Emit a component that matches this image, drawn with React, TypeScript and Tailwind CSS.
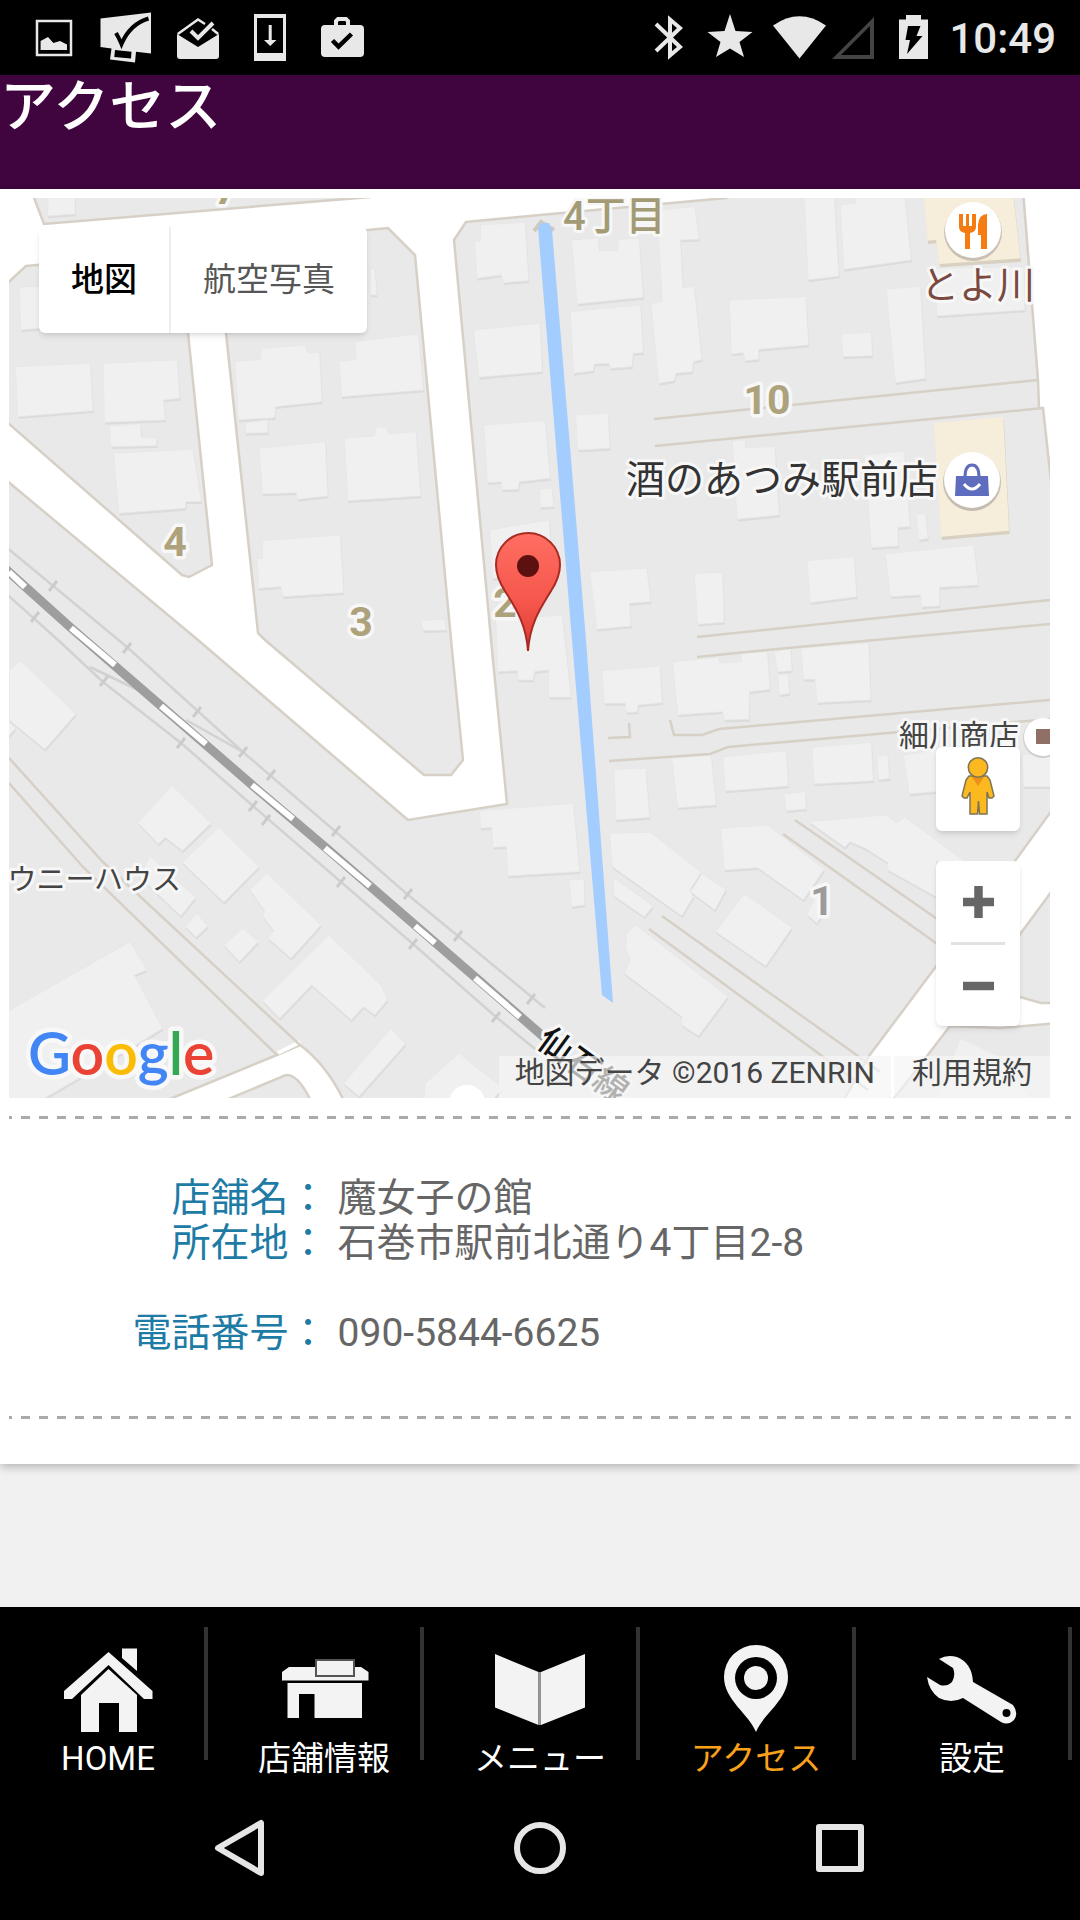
import type { ReactNode } from 'react'

const CREAM = "#f6edda"
const BLOCK = "#e9e9e9"
const EDGE = "#d6d0c7"

// Building outlines, grouped by map tile. Every tile has its own origin.
const tiles = [
    {
        id: "nw",
        transform: "translate(0 190) scale(0.3444 0.3333)",
        cream: [],
        buildings: [
            "140,24 218,24 218,72 138,78",
            "56,290 115,290 115,415 60,420",
            "45,530 262,520 270,662 52,680",
            "300,520 515,510 522,625 475,630 480,690 303,697",
            "318,708 408,702 410,742 455,745 455,767 322,770",
            "330,790 560,778 585,935 540,935 538,955 345,970",
            "682,515 755,508 760,475 885,465 892,487 928,487 935,635 800,650 798,683 692,690",
            "712,698 778,690 778,728 712,730",
            "1075,235 1088,235 1095,315 1075,315",
            "985,515 1035,508 1030,455 1215,432 1230,600 992,620",
            "752,775 945,755 952,918 865,928 860,908 762,912",
            "1000,745 1085,738 1095,710 1120,712 1128,733 1208,725 1222,918 1010,932",
            "762,1052 988,1035 998,1208 822,1220 815,1190 750,1195 748,1105 762,1105",
            "1222,1292 1290,1287 1297,1320 1228,1322",
            "1395,105 1525,97 1535,272 1462,278 1455,255 1385,265 1378,155 1395,152",
            "1375,420 1568,400 1575,545 1390,562",
            "1405,705 1583,692 1598,865 1508,875 1505,898 1458,900 1455,875 1415,878",
            "1568,897 1603,895 1608,950 1568,952",
            "1422,1020 1595,990 1605,1160 1430,1165",
            "1440,1290 1633,1275 1658,1522 1593,1522 1593,1440 1552,1445 1548,1470 1503,1470 1503,1442 1445,1445",
        ],
    },
    {
        id: "ne",
        transform: "translate(540 190) scale(0.3444 0.3333)",
        cream: [
            "1115,24 1375,24 1395,205 1160,222 1150,150 1125,152",
            "1143,700 1345,680 1362,1022 1165,1040",
        ],
        buildings: [
            "92,150 168,145 172,183 225,183 228,148 288,145 300,322 108,342",
            "340,60 450,50 462,148 408,150 415,292 448,290 470,508 445,515 442,545 395,550 390,572 345,580 322,340 355,335",
            "88,365 292,345 300,488 270,490 268,530 205,535 200,520 158,522 155,542 97,550",
            "550,330 772,320 780,465 635,478 635,508 595,512 590,488 555,492",
            "875,432 962,427 965,497 880,500",
            "768,24 855,24 868,258 778,270",
            "872,45 915,40 917,24 1060,24 1078,210 882,238",
            "1005,298 1105,288 1120,565 1032,578",
            "1150,235 1405,230 1408,360 1152,378",
            "103,675 198,670 203,775 110,780",
            "558,752 595,750 597,773 682,770 695,975 572,988",
            "942,795 1058,783 1075,1010 1040,1012 1040,1068 962,1073",
            "1092,975 1120,970 1127,1045 1100,1050",
            "145,1145 310,1135 322,1235 260,1240 265,1308 165,1318",
            "448,1150 530,1148 535,1297 458,1303",
            "775,1112 912,1100 920,1220 785,1238",
            "1003,1092 1260,1065 1273,1185 1160,1192 1160,1248 1108,1250 1105,1215 1018,1220",
        ],
    },
    {
        id: "sw",
        transform: "translate(0 640) scale(0.3444 0.3333)",
        cream: [],
        buildings: [
            "60,62 220,222 130,328 27,240 27,90",
            "20,240 45,265 20,295",
            "500,437 612,550 530,632 480,592 460,612 400,548",
            "635,562 752,680 650,787 530,668",
            "435,648 568,772 525,828 405,710",
            "775,700 932,855 845,955 778,895 795,872 765,832 768,812 725,750",
            "572,820 603,858 570,892 538,860",
            "705,865 750,905 695,965 650,915",
            "955,885 1108,1038 1125,1080 1088,1125 1055,1100 1020,1140 905,1035 812,1135 762,1082",
            "1135,1165 1177,1212 1042,1370 998,1330",
            "1332,1240 1460,1345 1430,1380 1230,1380 1235,1330",
            "20,1115 378,905 425,990 390,1005 472,1165 395,1215 130,1374 20,1390",
            "1393,512 1665,490 1683,695 1475,708 1470,620 1432,622 1427,562 1395,565",
        ],
    },
    {
        id: "se",
        transform: "translate(540 640) scale(0.3444 0.3333)",
        cream: [],
        buildings: [
            "180,92 348,78 355,188 285,195 283,215 250,218 248,190 187,190",
            "385,65 520,52 522,70 585,65 583,40 660,35 668,148 608,155 607,238 535,240 530,215 400,225",
            "680,35 728,25 732,92 690,95",
            "690,105 720,103 725,160 695,165",
            "758,25 955,8 960,180 805,188 798,118 765,118",
            "215,388 308,385 318,532 220,540",
            "382,355 497,345 512,495 400,503",
            "530,350 715,332 722,438 538,453",
            "708,462 770,455 773,507 715,512",
            "790,322 962,307 968,422 795,432",
            "978,350 1010,345 1015,415 983,420",
            "1055,345 1150,330 1150,455 1072,462",
            "1400,345 1490,335 1490,440 1403,440",
            "202,580 320,577 468,697 435,750 445,770 412,828 210,680",
            "470,702 540,748 508,810 437,755",
            "212,712 328,798 303,830 215,768",
            "525,565 660,555 825,688 765,780 632,683 535,690",
            "593,762 732,862 655,978 510,875",
            "800,770 830,800 805,850 775,825",
            "278,855 545,1070 460,1188 412,1155 412,1130 245,1000 262,960 248,925 252,880",
            "780,545 1005,525 1035,548 1060,532 1235,665 1150,665 1150,770 1010,690 1010,668 945,625 900,605 885,622",
            "85,720 128,718 130,795 92,800",
            "1220,1195 1330,1248 1430,1380 1150,1380",
        ],
    },
]

const blocks = [
    "31,190 44,224 370,197 370,190",
    "0,290 26,266 180,252 188,333 212,565 189,577 182,575 0,416",
    "217,243 368,230 388,228 415,255 452,650 463,760 451,775 424,775 265,640 258,633 226,333",
    "454,240 466,222 540,215 726,198 740,190 1023,190 1038,380 1039,408 1043,408 1052,490 1060,800 1050,813 1015,861 869,1056 838,1110 0,1110 0,475 198,640 408,820 507,804 492,650",
    "1060,880 975,995 1020,997 1041,1003 1060,1003",
    "1060,1023 1000,1028 950,1026 927,1056 885,1110 1060,1110",
]

const lanes = [
    "654,419 1038,380",
    "655,446 1043,408",
    "697,637 1050,600",
    "697,657 798,647 1050,624",
    "670,720 674,735 702,735 719,729 1050,700",
    "608,738 630,737 629,723",
    "609,761 710,754 728,747 1050,719",
    "795,820 940,921",
    "783,834 940,946",
    "662,916 858,1056 880,1072",
    "649,929 822,1056 868,1090",
    "9,758 103,862 300,1045",
    "9,783 83,867 277,1055",
]

const sidings = [
    "0,542 127,647 243,752 336,832 408,895 458,936 545,1008",
    "0,588 58,640 103,682 181,743 253,806 341,882 413,944 496,1017 540,1053",
    "90,667 138,690",
    "186,720 243,752",
]

const ticks = [
    [53, 586], [35, 617], [127, 648], [104, 681], [197, 712], [243, 752], [271, 775], [336, 831], [408, 894],
    [458, 936], [531, 999], [181, 743], [253, 806], [266, 820], [341, 882], [413, 944], [496, 1017],
]

const railGaps = [
    "9,572 25,587",
    "71,628 115,665",
    "161,706 206,744",
    "252,785 293,819",
    "325,848 370,886",
    "415,926 435,943",
    "475,978 520,1017",
]

const tabs = [
    { name: "HOME", icon: <HomeIcon />, active: false },
    { name: "店舗情報", icon: <ShopIcon />, active: false },
    { name: "メニュー", icon: <BookIcon />, active: false },
    { name: "アクセス", icon: <PinIcon />, active: true },
    { name: "設定", icon: <WrenchIcon />, active: false },
]

function StatusIcon({ className, width, children }: { className: string; width: number; children: ReactNode }) {
    return (
        <svg className={className} viewBox={`0 0 ${width} 75`} fill="#e8e8e8" aria-hidden="true">
            {children}
        </svg>
    )
}

function StatusBar() {
    return (
        <div className="flex h-[75px] items-center justify-between bg-black pr-6 pl-[18px]">
            <div className="flex">
                <StatusIcon className="h-[75px] w-[72px]" width={72}>
                    <rect x="19" y="21" width="34" height="34" fill="none" stroke="#e8e8e8" strokeWidth="2.5" />
                    <path d="M22.6 50V41L30 37L35.4 43L42 41L49 44.5V50Z" />
                </StatusIcon>
                <StatusIcon className="h-[75px] w-[72px]" width={72}>
                    <path d="M10.5 18.5L61 12.5V53.5L46 51.8L45 62.5L20 59.5L21.5 48.5L10.5 47Z" />
                    <path d="M25 50L41.5 51.7L41 58.5L24.3 57Z" fill="#000" />
                    <path d="M26 33Q29 38 31.5 44Q40 24 58.5 18.5" fill="none" stroke="#000" strokeWidth="4" />
                </StatusIcon>
                <StatusIcon className="h-[75px] w-[72px]" width={72}>
                    <path d="M15 34L36 47L57 34V56a3 3 0 0 1-3 3H18a3 3 0 0 1-3-3Z" />
                    <path d="M15.8 34L36 19.5L43 24M50 29L56.2 34" fill="none" stroke="#e8e8e8" strokeWidth="2.5" />
                    <path d="M29 31L36 38L51 23" fill="none" stroke="#e8e8e8" strokeWidth="4" />
                </StatusIcon>
                <StatusIcon className="h-[75px] w-[72px]" width={72}>
                    <path d="M20 14H52V61H20ZM23 18V53H49V18Z" fillRule="evenodd" />
                    <path d="M34.7 25H37.7V40H42.5L36.2 46L30 40H34.7Z" />
                </StatusIcon>
                <StatusIcon className="h-[75px] w-[72px]" width={72}>
                    <rect x="15" y="25" width="43" height="32" rx="4" />
                    <path d="M30 26V21L32 19H40L42 21V26" fill="none" stroke="#e8e8e8" strokeWidth="4" />
                    <path d="M26.5 40.5L32.5 46.5L45.5 34" fill="none" stroke="#000" strokeWidth="4.5" />
                </StatusIcon>
            </div>
            <div className="flex items-center">
                <StatusIcon className="h-[75px] w-[60px]" width={60}>
                    <path d="M18 24L42 47L32 55.5V19.5L42 28L18 51" fill="none" stroke="#e8e8e8" strokeWidth="4" />
                </StatusIcon>
                <StatusIcon className="h-[75px] w-[64px]" width={64}>
                    <path d="M32 14L37.5 31L54.5 32L41.5 42L46 57L32 48.5L18 57L22.5 42L9.5 32L26.5 31Z" />
                </StatusIcon>
                <StatusIcon className="h-[75px] w-[67px]" width={67}>
                    <path d="M37.5 58.5L11 25.5Q37.5 7 64 25.5Z" />
                </StatusIcon>
                <StatusIcon className="h-[75px] w-[48px]" width={48}>
                    <path d="M3 59H45V17ZM12 55H41V26Z" fillRule="evenodd" fill="#444" />
                </StatusIcon>
                <StatusIcon className="h-[75px] w-[72px]" width={72}>
                    <path d="M22 19.5H29V15H44V19.5H51V59H22Z" />
                    <path d="M31 26H43.5L39.5 36H45.5L30 54L33 40H28.5Z" fill="#000" />
                </StatusIcon>
                <span className="pt-[3px] text-[42px] leading-[72px] font-medium text-[#e8e8e8]">10:49</span>
            </div>
        </div>
    )
}

function MapCanvas() {
    return (
        <svg
            className="block h-full w-full"
            viewBox="9 198 1041 900"
            preserveAspectRatio="xMidYMid slice"
            role="img"
            aria-label="地図"
        >
            <defs>
                <linearGradient id="marker" x1="0" y1="0" x2="0" y2="1">
                    <stop offset="0" stopColor="#ff6e61" />
                    <stop offset="0.6" stopColor="#f5564c" />
                    <stop offset="1" stopColor="#d83a30" />
                </linearGradient>
            </defs>
            <rect x="0" y="190" width="1080" height="920" fill="#fff" />

            {/* City blocks, streets are what is left between them */}
            {blocks.map((points) => (
                <polygon key={points} points={points} fill={BLOCK} stroke={EDGE} strokeWidth="2.5" />
            ))}
            <path d="M165 1101L277 1055L300 1045Q327 1065 344 1101" fill="#fff" stroke={EDGE} strokeWidth="2.5" />
            <path d="M226 1100L286 1075Q298 1074 311 1101" fill={BLOCK} stroke={EDGE} strokeWidth="2.5" />
            <path d="M278 1053L300 1042" stroke="#fff" strokeWidth="4" />

            {tiles.map((tile) => (
                <g key={tile.id} transform={tile.transform}>
                    {tile.buildings.map((points) => (
                        <g key={points}>
                            <polygon points={points} fill="#dcdcdc" transform="translate(2 7)" />
                            <polygon points={points} fill="#f0f0f0" stroke="#e6e6e6" strokeWidth="2" />
                        </g>
                    ))}
                    {tile.cream.map((points) => (
                        <g key={points}>
                            <polygon points={points} fill="#d8d0c0" transform="translate(2 10)" />
                            <polygon points={points} fill={CREAM} />
                        </g>
                    ))}
                </g>
            ))}

            {lanes.map((points) => (
                <polyline key={points} points={points} fill="none" stroke={EDGE} strokeWidth="2.5" />
            ))}

            {/* Railway */}
            {sidings.map((points) => (
                <polyline key={points} points={points} fill="none" stroke="#d2d2d2" strokeWidth="2.5" />
            ))}
            {ticks.map(([x, y]) => (
                <path key={`${x}-${y}`} d={`M${x - 4} ${y + 5}L${x + 4} ${y - 5}`} stroke="#cbcbcb" strokeWidth="3" />
            ))}
            <polyline
                points="0,564 70,627 160,705 251,784 325,847 415,925 475,977 545,1038"
                fill="none"
                stroke="#9e9e9e"
                strokeWidth="9"
            />
            {railGaps.map((points) => (
                <polyline key={points} points={points} fill="none" stroke="#fff" strokeWidth="6" />
            ))}
            <circle cx="467" cy="1103" r="18" fill="#fff" />

            <path d="M534 231L541 222L554 230" fill="none" stroke="#cfcabf" strokeWidth="4" />
            <polygon points="538,228 541,223 549,223 552,230 586,640 613,1003 602,995 572,640" fill="#a3ccff" />

            {/* Block numbers and place names */}
            <g
                className="font-['Liberation_Sans_Narrow',Roboto] font-bold"
                fill="#ada27c"
                stroke="#f7f7f7"
                strokeWidth="7"
                strokeLinejoin="round"
                paintOrder="stroke"
                fontSize="41"
                textAnchor="middle"
            >
                <text x="226" y="204">7</text>
                <text x="175" y="556">4</text>
                <text x="361" y="636">3</text>
                <text x="505" y="617">2</text>
                <text x="767" y="414">10</text>
                <text x="822" y="915" fill="#9b9b9b">1</text>
            </g>
            <g stroke="#f7f7f7" strokeWidth="6" strokeLinejoin="round" paintOrder="stroke">
                <text className="font-medium" x="563" y="230" fontSize="40" fill="#a39a76">4丁目</text>
                <text x="921" y="298" fontSize="38" fill="#7a4a40">とよ川</text>
                <text x="626" y="493" fontSize="39" fill="#333">酒のあつみ駅前店</text>
                <text x="181" y="890" fontSize="29" fill="#444" textAnchor="end">ウニーハウス</text>
                <text x="899" y="746" fontSize="30" fill="#444">細川商店</text>
                <text className="font-medium" x="535" y="1045" fontSize="34" fill="#111" transform="rotate(36 535 1045)">仙石線</text>
            </g>

            {/* Points of interest */}
            <circle cx="973" cy="232" r="29" fill="#c9c2b4" />
            <circle cx="973" cy="230" r="28" fill="#fff" />
            <g fill="#f57c13">
                <path d="M959 214h4v12h3v-12h3v12h3v-12h4v13q0 5-6 6v16h-5v-16q-6-1-6-6Z" />
                <path d="M987 214v35h-6v-14h-3v-10q1-11 9-11Z" />
            </g>
            <circle cx="972" cy="482" r="29" fill="#c4bcb0" />
            <circle cx="972" cy="480" r="28" fill="#fff" />
            <path d="M956 476H988L989 496H955Z" fill="#5f6dbf" />
            <path d="M965 477Q965 465 972 465Q979 465 979 477" fill="none" stroke="#5f6dbf" strokeWidth="3" />
            <path d="M964 484Q972 494 980 484" fill="none" stroke="#fff" strokeWidth="3" />
            <circle cx="1043" cy="738" r="20" fill="#cfcfcf" />
            <circle cx="1043" cy="737" r="19" fill="#fff" />
            <rect x="1036" y="729" width="15" height="15" fill="#8f6f66" />

            {/* Marker */}
            <path
                d="M528 651C526 622 514 606 505 591Q496 577 496 565A32 32 0 0 1 560 565Q560 577 551 591C542 606 530 622 528 651Z"
                fill="url(#marker)"
                stroke="#a82a22"
                strokeWidth="2"
            />
            <circle cx="528" cy="566" r="11" fill="#5c1010" />

            {/* Logo */}
            <text
                className="font-[Lato] font-semibold"
                x="28"
                y="1075"
                fontSize="59"
                stroke="#f8f8f8"
                strokeWidth="9"
                strokeLinejoin="round"
                paintOrder="stroke"
            >
                <tspan fill="#4285f4">G</tspan>
                <tspan fill="#ea4335">o</tspan>
                <tspan fill="#fbbc05">o</tspan>
                <tspan fill="#4285f4">g</tspan>
                <tspan fill="#34a853">l</tspan>
                <tspan fill="#ea4335">e</tspan>
            </text>
        </svg>
    )
}

function MapSection() {
    return (
        <section className="relative mr-[30px] ml-[9px] h-[900px] overflow-hidden">
            <MapCanvas />

            <div className="absolute top-[29px] left-[30px] flex overflow-hidden rounded-md bg-white text-[33px] shadow-md">
                <button type="button" className="h-[106px] px-8 font-medium text-black">地図</button>
                <button type="button" className="h-[106px] border-l-2 border-[#eee] px-8 text-[#565656]">航空写真</button>
            </div>

            <div className="absolute right-[30px] bottom-[72px] flex w-[84px] flex-col gap-[30px]">
                <button type="button" aria-label="ストリートビュー" className="h-[84px] rounded-md bg-white shadow-md">
                    <svg className="size-[84px]" viewBox="0 0 84 84" fill="#fbb91f" stroke="#7d7455" strokeWidth="1.5">
                        <path d="M33 29H51L54 33L58 49L56 51H53L51 45V67H43.5L42.5 54L41.5 67H34V45L31 51H28L26 49L30 33Z" />
                        <path d="M36 30H48L42 39Z" fill="#ee8f1c" stroke="none" />
                        <circle cx="42" cy="20.5" r="9.7" />
                    </svg>
                </button>
                <div className="flex h-[165px] flex-col items-center rounded-md bg-white shadow-md">
                    <button type="button" aria-label="拡大" className="flex w-full flex-1 items-center justify-center">
                        <svg className="size-8" viewBox="0 0 32 32" stroke="#666" strokeWidth="8.5">
                            <path d="M1 16H32M16.5 0V32" />
                        </svg>
                    </button>
                    <div className="h-[3px] w-[54px] bg-[#e2e2e2]" />
                    <button type="button" aria-label="縮小" className="flex w-full flex-1 items-center justify-center">
                        <svg className="size-8" viewBox="0 0 32 32" stroke="#666" strokeWidth="8.5">
                            <path d="M1 16H32" />
                        </svg>
                    </button>
                </div>
            </div>

            <div className="absolute right-0 bottom-0 flex gap-[3px] text-[30px] leading-[34px] text-[#444]">
                <span className="bg-[#f5f5f5]/70 px-4 pb-2">地図データ ©2016 ZENRIN</span>
                <a href="#terms" className="bg-[#f5f5f5]/70 px-[18px] pb-2">利用規約</a>
            </div>
        </section>
    )
}

function DashedLine() {
    return (
        <div className="mx-[9px] h-[3px] bg-[repeating-linear-gradient(90deg,#aaa_0_3px,transparent_3px_12px,#aaa_12px_18px)]" />
    )
}

function ShopDetails() {
    return (
        <dl className="grid grid-cols-[30%_1fr] gap-x-[10px] px-[9px] pt-[57px] pb-[60px] text-[39px] leading-[45px] text-[#666]">
            <dt className="text-right text-[#1d7ba5]">店舗名：</dt>
            <dd>魔女子の館</dd>
            <dt className="text-right text-[#1d7ba5]">所在地：</dt>
            <dd className="pb-[45px]">石巻市駅前北通り4丁目2-8</dd>
            <dt className="text-right text-[#1d7ba5]">電話番号：</dt>
            <dd>090-5844-6625</dd>
        </dl>
    )
}

function HomeIcon() {
    return (
        <svg className="size-[90px]" viewBox="0 0 90 90" fill="#f3f3f3" aria-hidden="true">
            <path d="M59 4.5H74V27L59 14Z" />
            <path d="M45.5 8L89.5 47V55H81L45.5 21L9 55H1V47Z" />
            <path d="M45.5 25L74 51V88H56V59H36V88H18V51Z" />
        </svg>
    )
}

function ShopIcon() {
    return (
        <svg className="size-[90px]" viewBox="0 0 90 90" fill="#f3f3f3" aria-hidden="true">
            <path d="M10 23H82L89.5 28V36.5H3V28Z" />
            <path d="M8.5 39H83V74H35.5V50H20V74H8.5Z" />
            <rect x="36" y="15" width="40" height="18" fill="#555" />
            <rect x="38" y="17" width="36" height="14" />
        </svg>
    )
}

function BookIcon() {
    return (
        <svg className="size-[90px]" viewBox="0 0 90 90" fill="#f3f3f3" aria-hidden="true">
            <path d="M0 10L43.5 28V81L0 63.5Z" />
            <path d="M90 10L46 28V81L90 63.5Z" />
            <path d="M44.7 28V81" stroke="#999" strokeWidth="2.5" />
        </svg>
    )
}

function PinIcon() {
    return (
        <svg className="size-[90px]" viewBox="0 0 90 90" fill="#f3f3f3" aria-hidden="true">
            <path d="M45 88C38 70 13 56 13 33A32 32 0 0 1 77 33C77 56 52 70 45 88Z" />
            <circle cx="45" cy="34" r="21" fill="#000" />
            <circle cx="45" cy="34" r="12" />
        </svg>
    )
}

function WrenchIcon() {
    return (
        <svg className="size-[90px]" viewBox="0 0 90 90" fill="#f3f3f3" aria-hidden="true">
            <path d="M0 33L13 41Q20 43 25 38Q29 31 26 24L12 15Q20 10 30 13Q45 19 46 38L86 61Q92 69 87 76Q81 82 74 78L36 54Q24 60 12 54Q2 47 0 33Z" />
            <circle cx="79.5" cy="69" r="4" fill="#000" />
        </svg>
    )
}

function TabBar() {
    return (
        <nav className="grid h-[169px] grid-cols-5 bg-black">
            {tabs.map((tab) => (
                <a
                    key={tab.name}
                    href="#"
                    aria-current={tab.active ? "page" : undefined}
                    className="relative flex flex-col items-center pt-[37px]"
                >
                    {tab.icon}
                    <span className={`text-[33px] leading-[50px] ${tab.active ? "text-[#f9a11b]" : "text-white"}`}>
                        {tab.name}
                    </span>
                    <span className="absolute top-5 right-2 h-[133px] w-[4px] bg-[#333]" />
                </a>
            ))}
        </nav>
    )
}

function SystemBar() {
    return (
        <div className="flex h-[144px] items-center justify-center gap-[204px] bg-black">
            <button type="button" aria-label="戻る" className="size-24">
                <svg viewBox="0 0 96 96" fill="none" stroke="#e6e6e6" strokeWidth="6" strokeLinejoin="round">
                    <path d="M26 48L69 23V73Z" />
                </svg>
            </button>
            <button type="button" aria-label="ホーム" className="size-24">
                <svg viewBox="0 0 96 96" fill="none" stroke="#e6e6e6" strokeWidth="6">
                    <circle cx="48" cy="48" r="23" />
                </svg>
            </button>
            <button type="button" aria-label="履歴" className="size-24">
                <svg viewBox="0 0 96 96" fill="none" stroke="#e6e6e6" strokeWidth="6" strokeLinejoin="round">
                    <rect x="27" y="27" width="42" height="42" />
                </svg>
            </button>
        </div>
    )
}

export default function App() {
    return (
        <div className="flex min-h-screen flex-col bg-[#f1f1f1] font-[Roboto,'Noto_Sans_CJK_JP',sans-serif]">
            <StatusBar />
            <header className="h-[114px] bg-[#40053e]">
                <h1 className="text-[56px] leading-[64px] font-medium text-white">アクセス</h1>
            </header>
            <main className="flex-1">
                <div className="bg-white pt-[9px] pb-[45px] shadow-[0_3px_9px_rgba(0,0,0,0.25)]">
                    <MapSection />
                    <div className="h-[18px]" />
                    <DashedLine />
                    <ShopDetails />
                    <DashedLine />
                </div>
            </main>
            <TabBar />
            <SystemBar />
        </div>
    )
}
